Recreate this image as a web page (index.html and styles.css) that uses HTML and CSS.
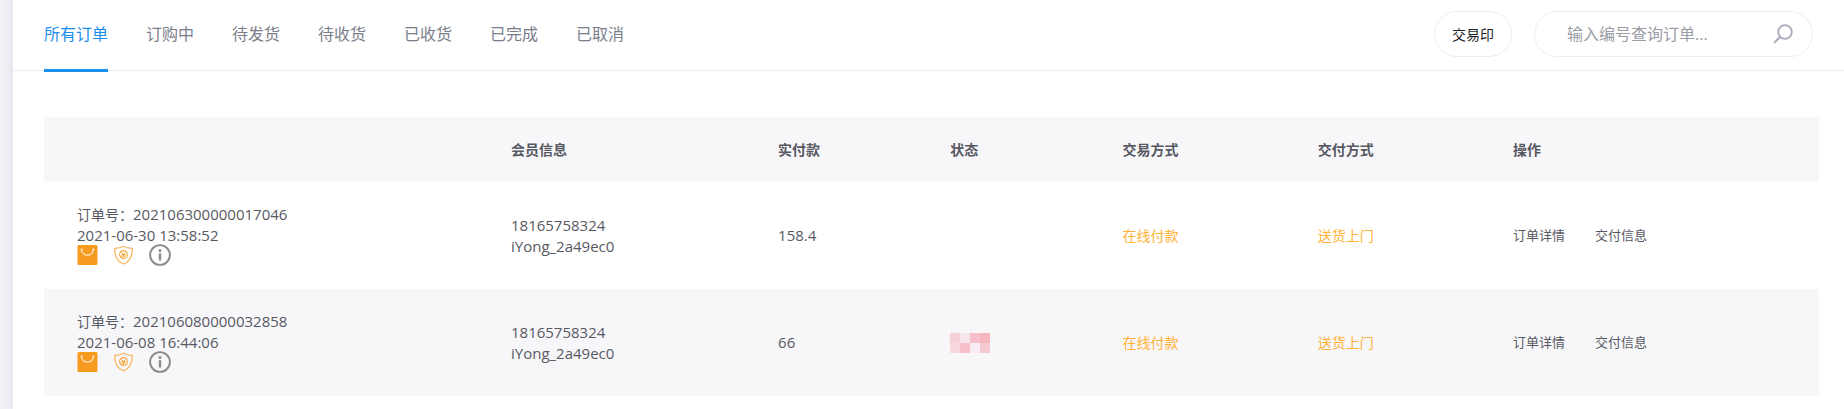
FILE: index.html
```
<!DOCTYPE html>
<html lang="zh-CN">
<head>
  <meta charset="UTF-8">
  <meta name="viewport" content="width=device-width, initial-scale=1.0">
  <title>所有订单</title>
  <link rel="stylesheet" href="styles.css">
</head>
<body>

<!-- shared row icons -->
<svg class="sprite" aria-hidden="true">
  <symbol id="bag" viewBox="0 0 20 20">
    <rect width="20" height="20" rx="1.5" fill="#f79a20"/>
    <path d="M4 4.500c.700 7.600 11.300 7.600 12 0" fill="none" stroke="#fdebcf" stroke-width="1.300" stroke-linecap="round"/>
    <circle cx="4.100" cy="4.500" r="1" fill="#fdebcf"/>
    <circle cx="15.900" cy="4.500" r="1" fill="#fdebcf"/>
  </symbol>
  <symbol id="shield" viewBox="0 0 20 20">
    <path d="M10 1.200C7.500 2.800 4.500 3.300 1.200 3.500c0 7.500 1.800 12.700 8.800 15.500 7-2.800 8.800-8 8.800-15.500C15.500 3.300 12.500 2.800 10 1.200z" fill="none" stroke="#f8b765" stroke-width="1.300" stroke-linejoin="round"/>
    <circle cx="10" cy="9.500" r="3.900" fill="none" stroke="#f7a63c" stroke-width="1.100"/>
    <path d="M8 7.500l2 2 2-2M10 9.500v2.800M8 9.500h4M8 11h4" fill="none" stroke="#f7a63c" stroke-width="1"/>
  </symbol>
  <symbol id="info" viewBox="0 0 22 22">
    <circle cx="11" cy="11" r="9.900" fill="none" stroke="#8a8a8a" stroke-width="1.900"/>
    <circle cx="11" cy="6.500" r="1.500" fill="#8a8a8a"/>
    <path d="M11 9.200v7.300" stroke="#8a8a8a" stroke-width="2.400"/>
  </symbol>
</svg>

<main class="panel">
  <header class="toolbar">
    <nav class="tabs">
      <a class="active" href="#all">所有订单</a>
      <a href="#ordering">订购中</a>
      <a href="#to-ship">待发货</a>
      <a href="#to-receive">待收货</a>
      <a href="#received">已收货</a>
      <a href="#done">已完成</a>
      <a href="#cancelled">已取消</a>
    </nav>
    <div class="tools">
      <button class="stamp" type="button">交易印</button>
      <form class="search">
        <input type="text" name="order" placeholder="输入编号查询订单..." aria-label="输入编号查询订单">
        <button type="submit" aria-label="搜索">
          <svg width="20" height="20" viewBox="0 0 20 20">
            <circle cx="12" cy="8" r="6.800" fill="none" stroke="#a9a9bf" stroke-width="1.800"/>
            <path d="M7.200 12.800L1.200 18.800" stroke="#a9a9bf" stroke-width="2"/>
          </svg>
        </button>
      </form>
    </div>
  </header>

  <section class="orders">
    <table>
      <colgroup>
        <col class="col-order">
        <col class="col-member">
        <col class="col-short">
        <col class="col-short">
        <col class="col-way">
        <col class="col-way">
        <col>
      </colgroup>
      <thead>
        <tr>
          <th></th>
          <th>会员信息</th>
          <th>实付款</th>
          <th>状态</th>
          <th>交易方式</th>
          <th>交付方式</th>
          <th>操作</th>
        </tr>
      </thead>
      <tbody>
        <tr>
          <td>
            <div>订单号：<span class="num">202106300000017046</span></div>
            <div class="num">2021-06-30 13:58:52</div>
            <div class="icons">
              <svg class="icon"><use href="#bag"/></svg>
              <svg class="icon"><use href="#shield"/></svg>
              <svg class="icon info"><use href="#info"/></svg>
            </div>
          </td>
          <td class="num">18165758324<br>iYong_2a49ec0</td>
          <td class="num">158.4</td>
          <td></td>
          <td class="way">在线付款</td>
          <td class="way">送货上门</td>
          <td>
            <div class="actions">
              <a href="#detail">订单详情</a>
              <a href="#delivery">交付信息</a>
            </div>
          </td>
        </tr>
        <tr>
          <td>
            <div>订单号：<span class="num">202106080000032858</span></div>
            <div class="num">2021-06-08 16:44:06</div>
            <div class="icons">
              <svg class="icon"><use href="#bag"/></svg>
              <svg class="icon"><use href="#shield"/></svg>
              <svg class="icon info"><use href="#info"/></svg>
            </div>
          </td>
          <td class="num">18165758324<br>iYong_2a49ec0</td>
          <td class="num">66</td>
          <td>
            <svg class="mosaic" viewBox="0 0 4 2" shape-rendering="crispEdges">
              <rect width="1" height="1" fill="#f6d0d7"/>
              <rect x="1" width="1" height="1" fill="#f7e6eb"/>
              <rect x="2" width="1" height="1" fill="#f6bfc9"/>
              <rect x="3" width="1" height="1" fill="#f7b6bc"/>
              <rect y="1" width="1" height="1" fill="#f6d8dd"/>
              <rect x="1" y="1" width="1" height="1" fill="#f6bfca"/>
              <rect x="2" y="1" width="1" height="1" fill="#f7edf2"/>
              <rect x="3" y="1" width="1" height="1" fill="#f6c9d2"/>
            </svg>
          </td>
          <td class="way">在线付款</td>
          <td class="way">送货上门</td>
          <td>
            <div class="actions">
              <a href="#detail">订单详情</a>
              <a href="#delivery">交付信息</a>
            </div>
          </td>
        </tr>
      </tbody>
    </table>
  </section>
</main>

</body>
</html>
```
FILE: styles.css
```
* {
  box-sizing: border-box;
}
body {
  margin: 0;
  padding-left: 13px;
  background: #f2f3f8;
  color: #575962;
  font-family: "Open Sans", "Noto Sans CJK SC", sans-serif;
  font-size: 14px;
  line-height: 21px;
}
a {
  color: inherit;
  text-decoration: none;
}
button, input {
  font-family: inherit;
  border: 0;
  padding: 0;
  background: none;
}
.sprite {
  display: none;
}
.panel {
  min-height: 100vh;
  background: #fff;
  box-shadow: 0 0 15px 1px rgba(69, 65, 78, 0.1);
}

/* tabs + search */
.toolbar {
  display: flex;
  justify-content: space-between;
  height: 71px;
  padding: 0 31px;
  border-bottom: 1px solid #ebedf2;
}
.tabs {
  display: flex;
  gap: 38px;
  height: 72px;
}
.tabs a {
  padding-top: 24px;
  border-bottom: 3px solid transparent;
  color: #7b7e8a;
  font-size: 16px;
}
.tabs .active {
  color: #1b8fec;
  border-color: #1b8fec;
}
.tools {
  display: flex;
  gap: 22px;
  padding-top: 11px;
}
.stamp {
  width: 78px;
  height: 46px;
  border: 1px solid #ebedf2;
  border-radius: 23px;
  color: #212529;
  font-size: 14px;
}
.search {
  display: flex;
  align-items: center;
  width: 279px;
  height: 46px;
  padding: 0 19px 0 32px;
  border: 1px solid #ebedf2;
  border-radius: 23px;
}
.search input {
  flex: 1;
  min-width: 0;
  height: 44px;
  color: #575962;
  font-size: 16px;
  outline: none;
}
.search input::placeholder {
  color: #9a9ca5;
  opacity: 1;
}
.search button {
  height: 24px;
}
.search svg {
  display: block;
}

/* order table */
.orders {
  padding: 46px 25px 12px 31px;
}
table {
  width: 100%;
  table-layout: fixed;
  border-collapse: collapse;
}
.col-order {
  width: 24.45%;
}
.col-member {
  width: 15.05%;
}
.col-short {
  width: 9.7%;
}
.col-way {
  width: 11%;
}
th, td {
  padding: 22px 0 22px 33px;
  text-align: left;
  vertical-align: middle;
}
th {
  font-weight: 600;
}
thead tr, tbody tr:nth-child(even) {
  background: #f7f7fa;
}
.num {
  font-size: 15px;
}
.way {
  color: #ffb236;
}
.icons {
  display: flex;
  align-items: center;
  gap: 15px;
  height: 21px;
  margin: -2px 0 2px;
}
.icon {
  width: 21px;
  height: 20px;
}
.info {
  width: 22px;
  height: 22px;
}
.mosaic {
  display: block;
  width: 40px;
  height: 20px;
}
.actions {
  display: flex;
  gap: 30px;
  font-size: 13px;
}
```
